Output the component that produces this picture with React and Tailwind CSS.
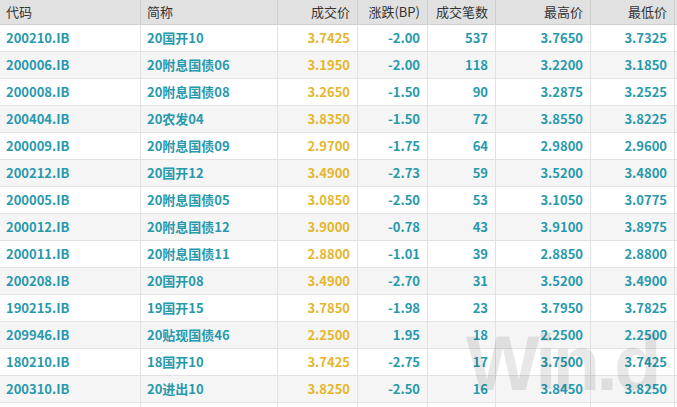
const COLS = ['代码', '简称', '成交价', '涨跌(BP)', '成交笔数', '最高价', '最低价']

const ROWS = [
  ['200210.IB', '20国开10', '3.7425', '-2.00', '537', '3.7650', '3.7325'],
  ['200006.IB', '20附息国债06', '3.1950', '-2.00', '118', '3.2200', '3.1850'],
  ['200008.IB', '20附息国债08', '3.2650', '-1.50', '90', '3.2875', '3.2525'],
  ['200404.IB', '20农发04', '3.8350', '-1.50', '72', '3.8550', '3.8225'],
  ['200009.IB', '20附息国债09', '2.9700', '-1.75', '64', '2.9800', '2.9600'],
  ['200212.IB', '20国开12', '3.4900', '-2.73', '59', '3.5200', '3.4800'],
  ['200005.IB', '20附息国债05', '3.0850', '-2.50', '53', '3.1050', '3.0775'],
  ['200012.IB', '20附息国债12', '3.9000', '-0.78', '43', '3.9100', '3.8975'],
  ['200011.IB', '20附息国债11', '2.8800', '-1.01', '39', '2.8850', '2.8800'],
  ['200208.IB', '20国开08', '3.4900', '-2.70', '31', '3.5200', '3.4900'],
  ['190215.IB', '19国开15', '3.7850', '-1.98', '23', '3.7950', '3.7825'],
  ['209946.IB', '20贴现国债46', '2.2500', '1.95', '18', '2.2500', '2.2500'],
  ['180210.IB', '18国开10', '3.7425', '-2.75', '17', '3.7500', '3.7425'],
  ['200310.IB', '20进出10', '3.8250', '-2.50', '16', '3.8450', '3.8250'],
]

const GRID = 'grid grid-cols-[141px_137px_80px_70px_68px_95px_84px]'

export default function App() {
  return (
    <div className="relative w-[677px] h-[407px] overflow-hidden bg-white font-['Noto_Sans_CJK_SC','Noto_Sans',sans-serif] text-[13px]">
      {/* Header */}
      <div className={`${GRID} h-[25px] bg-[#e1e1e1] text-[#333] border-b border-[#d0d0d0]`}>
        {COLS.map((c, i) => (
          <div
            key={c}
            className={`flex items-center border-r border-[#cfcfcf] ${i < 2 ? 'pl-[6px]' : 'justify-end pr-[7px]'}`}
          >
            {c}
          </div>
        ))}
      </div>

      {/* Rows */}
      {ROWS.map((r, ri) => (
        <div
          key={r[0]}
          className={`${GRID} h-[27px] border-b border-[#e2e2e2] font-semibold ${ri % 2 === 1 ? 'bg-[#f5f5f5]' : 'bg-white'}`}
        >
          {r.map((v, i) => (
            <div
              key={i}
              className={`relative z-10 flex items-center border-r border-[#e2e2e2] ${i < 2 ? 'pl-[6px]' : 'justify-end pr-[7px]'} ${i === 2 ? 'text-[#e6b52c]' : 'text-[#2799ad]'}`}
            >
              {v}
            </div>
          ))}
        </div>
      ))}
      <div className={`${GRID} h-[27px] bg-white`}>
        {COLS.map((c) => (
          <div key={c} className="border-r border-[#e2e2e2]" />
        ))}
      </div>

      {/* Watermark */}
      <div className="pointer-events-none absolute z-20 left-[466px] top-[324px] text-[78px] font-bold leading-none tracking-[-4px] text-black/[0.09] font-['Liberation_Sans',sans-serif]">
        Win.d
      </div>
    </div>
  )
}
